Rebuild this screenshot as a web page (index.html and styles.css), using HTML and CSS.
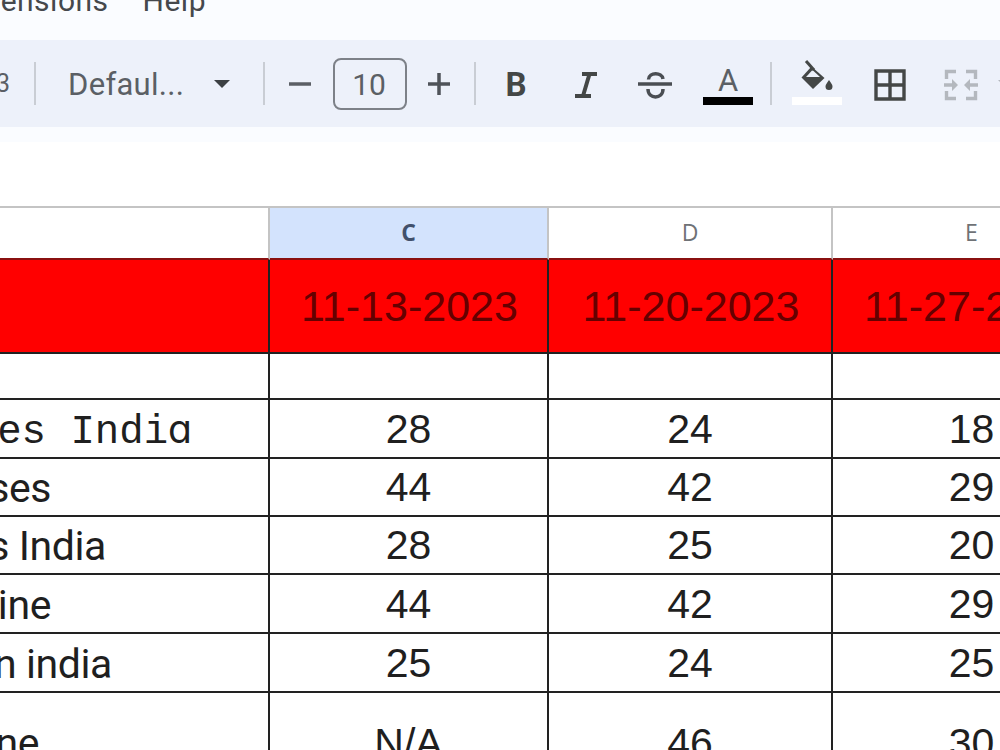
FILE: index.html
```html
<!DOCTYPE html>
<html lang="en">
<head>
    <meta charset="UTF-8">
    <meta name="viewport" content="width=device-width, initial-scale=1.0">
    <title>Spreadsheet</title>
    <link rel="stylesheet" href="styles.css">
</head>
<body>
    <nav class="menu">
        <span>ensions</span>
        <span>Help</span>
    </nav>
    <div class="toolbar">
        <div class="tool format">3</div>
        <div class="divider"></div>
        <div class="tool font-select">
            <span class="font-name">Defaul...</span>
            <svg width="18" height="10" viewBox="0 0 18 10"><path d="M1 1h16L9 9z" fill="#3c4043"/></svg>
        </div>
        <div class="divider"></div>
        <div class="tool minus"><svg width="24" height="24" viewBox="0 0 24 24"><path d="M1 12h22" stroke="#5b5f65" stroke-width="3.5"/></svg></div>
        <div class="size">10</div>
        <div class="tool plus"><svg width="24" height="24" viewBox="0 0 24 24"><path d="M1 12h22M12 1v22" stroke="#4f5359" stroke-width="3.5"/></svg></div>
        <div class="divider"></div>
        <div class="tool bold">B</div>
        <div class="tool italic"><svg width="24" height="28" viewBox="0 0 24 28"><path d="M8 3h15M1 25h16M15.500 3L9 25" fill="none" stroke="#444746" stroke-width="4"/></svg></div>
        <div class="tool strike">
            <svg width="36" height="28" viewBox="0 0 36 28" fill="none" stroke="#4a4e53" stroke-width="3.5">
                <path d="M1 13h34" stroke-width="3.5"/>
                <path d="M11.500 8.500C12 1 25 1 26 8M11 18C11 28.500 26 28.500 26 18"/>
            </svg>
        </div>
        <div class="tool color">
            <span class="letter">A</span>
            <span class="bar"></span>
        </div>
        <div class="divider"></div>
        <div class="tool fill">
            <svg width="34" height="34" viewBox="0 0 34 34">
                <path d="M11.500 6.500L24.500 18 13 29 1.500 17.500z" fill="#444746"/>
                <path d="M12.500 10L6 17h14z" fill="#edf1fa"/>
                <path d="M6 1L14 10" stroke="#444746" stroke-width="3"/>
                <path d="M29 20c2 3 3.500 4.500 3.500 6.500a3.500 3.500 0 0 1-7 0c0-2 1.500-3.500 3.500-6.500z" fill="#444746"/>
            </svg>
            <span class="bar"></span>
        </div>
        <div class="tool borders">
            <svg width="32" height="32" viewBox="0 0 32 32" fill="none" stroke="#444746" stroke-width="3.4"><path d="M2 2h28v28H2zM16 2v28M2 16h28"/></svg>
        </div>
        <div class="tool merge">
            <svg width="36" height="32" viewBox="0 0 36 32" fill="none" stroke="#b4b8be" stroke-width="3.4">
                <path d="M13 2.500H3.500V10M3.500 22v7.500H13M23 2.500h9.500V10M32.500 22v7.500H23"/>
                <path d="M1 16h9M35 16h-9"/>
                <path d="M9 10l6 6-6 6zM27 10l-6 6 6 6z" fill="#b4b8be" stroke="none"/>
            </svg>
        </div>
        <div class="tool"><svg width="18" height="10" viewBox="0 0 18 10"><path d="M1 1h16L9 9z" fill="#b4b8be"/></svg></div>
    </div>
    <div class="formula-bar"></div>
    <div class="sheet">
        <div class="head"></div>
        <div class="head selected">C</div>
        <div class="head">D</div>
        <div class="head">E</div>

        <div class="cell date"></div>
        <div class="cell date">11-13-2023</div>
        <div class="cell date">11-20-2023</div>
        <div class="cell date">11-27-2023</div>

        <div class="cell"></div>
        <div class="cell"></div>
        <div class="cell"></div>
        <div class="cell"></div>

        <div class="cell name mono"><span>es Indi<span class="round-a">a</span></span></div>
        <div class="cell">28</div>
        <div class="cell">24</div>
        <div class="cell">18</div>

        <div class="cell name ses"><span>ses</span></div>
        <div class="cell">44</div>
        <div class="cell">42</div>
        <div class="cell">29</div>

        <div class="cell name s-india"><span>s India</span></div>
        <div class="cell">28</div>
        <div class="cell">25</div>
        <div class="cell">20</div>

        <div class="cell name ine"><span>ine</span></div>
        <div class="cell">44</div>
        <div class="cell">42</div>
        <div class="cell">29</div>

        <div class="cell name n-india"><span>n india</span></div>
        <div class="cell">25</div>
        <div class="cell">24</div>
        <div class="cell">25</div>

        <div class="cell name ne"><span>ne</span></div>
        <div class="cell">N/A</div>
        <div class="cell">46</div>
        <div class="cell">30</div>
    </div>
</body>
</html>
```
FILE: styles.css
```css
* {
    box-sizing: border-box;
}

body {
    margin: 0;
    width: 1000px;
    height: 750px;
    overflow: hidden;
    background-color: #fff;
    font-family: "Liberation Sans", Arial, sans-serif;
}

/* Menu */
.menu {
    display: flex;
    align-items: flex-end;
    justify-content: flex-end;
    gap: 34px;
    height: 40px;
    padding-right: 794px;
    padding-bottom: 21px;
    font-family: Roboto, sans-serif;
    font-size: 30px;
    line-height: 36px;
    letter-spacing: 0.5px;
    color: #45484c;
    background-color: #fafcff;
}

/* Toolbar */
.toolbar {
    display: flex;
    align-items: center;
    width: 1000px;
    height: 87px;
    overflow: hidden;
    background-color: #edf1fa;
    font-family: Roboto, sans-serif;
    color: #5b5f65;
}

.tool {
    display: flex;
    flex: none;
    align-items: center;
    justify-content: center;
}

.divider {
    flex: none;
    width: 2px;
    height: 43px;
    background-color: #c9cdd4;
}

.format {
    width: 34px;
    padding-right: 24px;
    justify-content: flex-end;
    font-size: 25px;
}

.font-select {
    width: 227px;
    padding: 0 32px 0 32px;
    justify-content: space-between;
}

.font-name {
    padding-top: 1px;
    font-size: 31px;
    letter-spacing: 0.3px;
}

.minus {
    width: 68px;
    padding-left: 2px;
}

.size {
    flex: none;
    width: 74px;
    height: 52px;
    padding-right: 2px;
    border: 2px solid #7d8188;
    border-radius: 8px;
    font-size: 30px;
    line-height: 49px;
    text-align: center;
}

.plus {
    width: 67px;
    padding-right: 4px;
}

.bold {
    width: 80px;
    padding-top: 2px;
    font-size: 33px;
    font-weight: bold;
    color: #444746;
}

.italic {
    width: 60px;
    padding-top: 3px;
}

.strike {
    width: 78px;
    padding-top: 3px;
}

.color,
.fill {
    flex-direction: column;
    justify-content: flex-start;
    height: 87px;
}

.color {
    width: 68px;
    margin-right: 8px;
    padding-top: 24px;
}

.letter {
    height: 33px;
    font-size: 31px;
    line-height: 33px;
}

.bar {
    width: 50px;
    height: 8px;
    background-color: #000;
}

.fill {
    width: 90px;
    padding-top: 20px;
}

.fill .bar {
    margin-top: 3px;
    background-color: #fff;
}

.borders {
    width: 55px;
    padding-top: 3px;
}

.merge {
    width: 80px;
    padding-top: 3px;
    padding-left: 8px;
}

.formula-bar {
    height: 79px;
    background: linear-gradient(#fafcff 15px, #fff 15px);
}

/* Sheet */
.sheet {
    display: grid;
    grid-template-columns: 270px 279px 284px 279px;
    grid-template-rows: 54px 94px 46px 59px 58px 58px 59px 59px 102px;
    width: 1112px;
}

.head {
    display: flex;
    align-items: center;
    justify-content: center;
    padding-bottom: 3px;
    border-top: 2px solid #c4c4c4;
    border-right: 2px solid #c4c4c4;
    border-bottom: 2px solid #8a1010;
    font-family: "Open Sans", sans-serif;
    font-size: 23px;
    color: #6f7276;
}

.selected {
    background-color: #d3e3fd;
    font-weight: bold;
    color: #41506b;
}

.cell {
    display: flex;
    align-items: center;
    justify-content: center;
    border-right: 2px solid #222;
    border-bottom: 2px solid #222;
    font-size: 41px;
    line-height: 48px;
    color: #1f1f1f;
    white-space: nowrap;
}

.date {
    padding-left: 2px;
    background-color: #ff0000;
    font-size: 43px;
    color: #650000;
}

/* Names run out of the left side of the window */
.name {
    justify-content: flex-end;
    padding-top: 2px;
    overflow: hidden;
    font-family: Roboto, sans-serif;
    font-size: 41px;
    letter-spacing: -0.4px;
}

.mono {
    padding-top: 4px;
    padding-right: 76px;
    font-family: "Liberation Mono", monospace;
    font-size: 40.700px;
    letter-spacing: 0;
}

.round-a {
    font-family: Inter, sans-serif;
    font-size: 39px;
    font-feature-settings: "cv11";
}

.ses,
.ine {
    padding-right: 217px;
}

.s-india {
    padding-right: 162px;
}

.n-india {
    padding-right: 156px;
}

.ne {
    padding-top: 0;
    padding-right: 229px;
}
```
